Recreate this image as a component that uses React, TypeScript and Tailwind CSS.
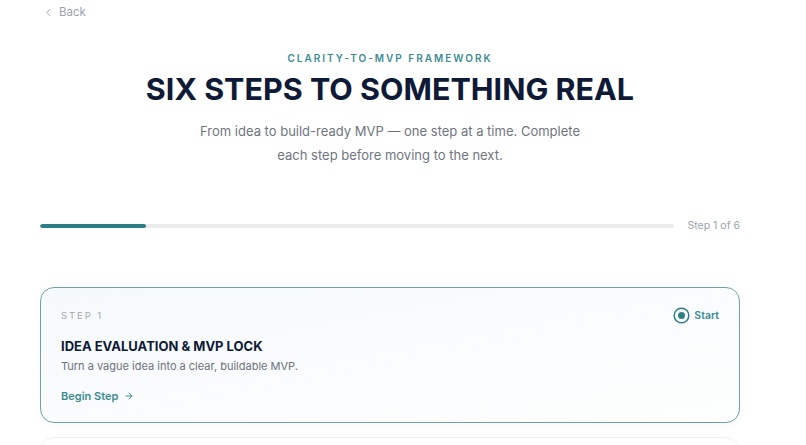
import React from 'react';
import { ChevronLeft, ArrowRight } from 'lucide-react';

const font = { fontFamily: 'Inter, "Noto Sans", sans-serif' };

export default function App() {
  const step = 1;
  const total = 6;

  return (
    <div className="min-h-screen bg-white overflow-hidden" style={font}>
      <div className="w-[700px] ml-[40px]">
        {/* Back link */}
        <div className="h-[24px] pt-[1px] flex items-center gap-1 pl-[2px] text-[11.5px] text-[#9ca3af]">
          <ChevronLeft className="w-[13px] h-[13px]" strokeWidth={1.8} />
          <span>Back</span>
        </div>

        {/* Header */}
        <div className="flex flex-col items-center text-center">
          <p className="mt-[27px] text-[10px] font-semibold tracking-[0.2em] text-[#3b8c92] leading-[14px]">
            CLARITY-TO-MVP FRAMEWORK
          </p>
          <h1 className="mt-[6px] text-[30.5px] leading-[36px] font-bold text-[#0e1a36]">
            SIX STEPS TO SOMETHING REAL
          </h1>
          <p className="mt-[12px] max-w-[380px] text-[13px] leading-[24px] text-[#6f7580]">
            From idea to build-ready MVP — one step at a time. Complete each step before moving to the next.
          </p>
        </div>

        {/* Progress */}
        <div className="mt-[51px] flex items-center gap-[14px]">
          <div className="flex-1 h-[4px] rounded-full bg-[#ececec] overflow-hidden">
            <div className="h-full rounded-full bg-[#2c7f86]" style={{ width: `${(step / total) * 100}%` }} />
          </div>
          <span className="text-[10.5px] leading-[16px] text-[#9ca3af] whitespace-nowrap">Step {step} of {total}</span>
        </div>

        {/* Step card */}
        <div className="mt-[53px] rounded-[14px] border border-[#6fa2a6] bg-gradient-to-br from-[#f6f9fb] to-[#fdfefe] shadow-[0_2px_10px_rgba(0,0,0,0.03)] px-5 pt-[20px] pb-[18px]">
          <div className="flex items-start justify-between">
            <p className="text-[9.5px] tracking-[0.2em] text-[#a3a8b0] leading-[15px]">STEP 1</p>
            <div className="flex items-center gap-[4px] -mt-[1px]">
              <svg width="17" height="17" viewBox="0 0 17 17">
                <circle cx="8.5" cy="8.5" r="7.3" fill="none" stroke="#2c7f86" strokeWidth="1.5" />
                <circle cx="8.5" cy="8.5" r="3.5" fill="#2c7f86" />
              </svg>
              <span className="text-[10.5px] font-semibold text-[#3b8c92]">Start</span>
            </div>
          </div>
          <h2 className="mt-[13px] text-[13px] leading-[19px] font-bold text-[#0e1a36]">IDEA EVALUATION &amp; MVP LOCK</h2>
          <p className="mt-[2px] text-[11px] leading-[17px] text-[#6b7280]">Turn a vague idea into a clear, buildable MVP.</p>
          <button className="mt-[13px] flex items-center gap-[6px] text-[11px] leading-[16px] font-semibold text-[#3b8c92]">
            Begin Step
            <ArrowRight className="w-[10px] h-[10px]" strokeWidth={2.4} />
          </button>
        </div>

        {/* Next card (partially visible) */}
        <div className="mt-[14px] h-[120px] rounded-[14px] border border-[#f0f1f2] bg-white" />
      </div>
    </div>
  );
}
